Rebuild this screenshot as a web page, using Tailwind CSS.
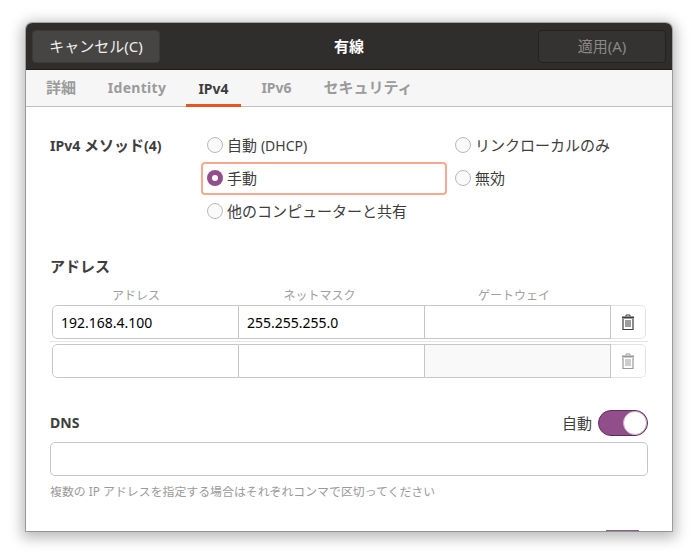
<!DOCTYPE html>
<html lang="ja">
<head>
    <meta charset="UTF-8">
    <title>有線</title>
    <script src="https://cdn.jsdelivr.net/npm/@tailwindcss/browser@4"></script>
</head>
<body class="bg-white h-[560px] w-[698px] overflow-hidden font-['Noto_Sans','Noto_Sans_CJK_JP',sans-serif] text-[15px] text-[#3d3d3d]">
    <!-- Window -->
    <div class="ml-[26px] mt-[23px] w-[646px] h-[508px] bg-white rounded-t-[6px] overflow-hidden shadow-[0_3px_14px_4px_rgba(0,0,0,0.28),0_0_0_1px_rgba(0,0,0,0.25)] flex flex-col">
        <!-- Header bar -->
        <div class="h-[47px] shrink-0 bg-[#302d2d] border-b border-[#1e1c1c] flex items-center justify-between px-[6px]">
            <button class="w-[128px] h-[33px] rounded-[4px] bg-[#474543] text-[#eeeeec] border border-[#3c3a39]">キャンセル(C)</button>
            <div class="text-white font-bold">有線</div>
            <button class="w-[128px] h-[33px] rounded-[4px] bg-[#353232] text-[#8b8886] border border-[#232121]">適用(A)</button>
        </div>

        <!-- Tabs -->
        <div class="h-[37px] shrink-0 bg-[#f6f6f6] border-b border-[#bfbfbf] flex pl-[8px] font-bold text-[#9b9b9b]">
            <div class="w-[54px] flex items-center justify-center pb-[1px]">詳細</div>
            <div class="w-[98px] flex items-center justify-center pb-[1px] text-[14px] tracking-[0.3px]">Identity</div>
            <div class="w-[55px] flex items-center justify-center text-[14px] text-[#3d3d3d] border-b-[3px] border-[#e95420] pt-[2px] -mb-px">IPv4</div>
            <div class="w-[71px] flex items-center justify-center pb-[1px] text-[14px]">IPv6</div>
            <div class="w-[112px] flex items-center justify-center pb-[1px]">セキュリティ</div>
        </div>

        <!-- Content -->
        <div class="relative flex-1 px-[24px]">
            <!-- Method -->
            <div class="flex mt-[22px] h-[99px]">
                <div class="w-[151px] pt-[5px] font-bold leading-[22px] whitespace-nowrap"><span class="text-[14px]">IPv4</span> メソッド<span class="text-[14px]">(4)</span></div>
                <div class="w-[248px] flex flex-col">
                    <div class="h-[33px] flex items-center gap-[4px] pl-[6px] pb-[1px]">
                        <span class="w-[16px] h-[16px] rounded-full border border-[#b9b9b9] bg-[#fafafa]"></span>
                        <span>自動 <span class="text-[14px]">(DHCP)</span></span>
                    </div>
                    <div class="h-[33px] w-[246px] flex items-center gap-[4px] pl-[4px] pb-[1px] border-2 border-[#f6a98e] rounded-[4px]">
                        <span class="w-[16px] h-[16px] rounded-full bg-[#924d8b] flex items-center justify-center">
                            <span class="w-[6px] h-[6px] rounded-full bg-white"></span>
                        </span>
                        <span>手動</span>
                    </div>
                    <div class="h-[33px] flex items-center gap-[4px] pl-[6px] pb-[1px]">
                        <span class="w-[16px] h-[16px] rounded-full border border-[#b9b9b9] bg-[#fafafa]"></span>
                        <span>他のコンピューターと共有</span>
                    </div>
                </div>
                <div class="flex flex-col">
                    <div class="h-[33px] flex items-center gap-[4px] pl-[6px] pb-[1px]">
                        <span class="w-[16px] h-[16px] rounded-full border border-[#b9b9b9] bg-[#fafafa]"></span>
                        <span>リンクローカルのみ</span>
                    </div>
                    <div class="h-[33px] flex items-center gap-[4px] pl-[6px] pb-[1px]">
                        <span class="w-[16px] h-[16px] rounded-full border border-[#b9b9b9] bg-[#fafafa]"></span>
                        <span>無効</span>
                    </div>
                </div>
            </div>

            <!-- Addresses -->
            <div class="mt-[27px] font-bold leading-[22px]">アドレス</div>
            <div class="mt-[10px] ml-[2px] w-[594px] grid grid-cols-[187px_186px_186px_35px] text-[12px] text-[#a0a0a0] leading-[18px] h-[18px]">
                <div class="text-center pr-[19px]">アドレス</div>
                <div class="text-center pr-[25px]">ネットマスク</div>
                <div class="text-center pr-[8px]">ゲートウェイ</div>
            </div>
            <div class="border-b border-[#e4e4e4] pb-[2px] px-[2px]">
                <div class="h-[34px] w-[594px] flex rounded-[5px] overflow-hidden text-[14px]">
                    <div class="w-[187px] border border-[#c6c6c6] rounded-l-[5px] flex items-center pl-[8px] text-black">192.168.4.100</div>
                    <div class="w-[186px] border-y border-r border-[#c6c6c6] flex items-center pl-[8px] text-black">255.255.255.0</div>
                    <div class="w-[186px] border-y border-r border-[#c6c6c6]"></div>
                    <div class="w-[35px] border-y border-r border-[#e2e2e2] rounded-r-[5px] flex items-center justify-center">
                        <svg width="14" height="17" viewBox="0 0 14 17" fill="none" stroke="#3d3d3d">
                            <path d="M1 3.5h12" stroke-width="2"/>
                            <path d="M5 2.5V1h4v1.5" stroke-width="1"/>
                            <path d="M2 5v10.5h10V5" stroke-width="1.2"/>
                            <path d="M5 6v7M7 6v7M9 6v7" stroke-width="1"/>
                        </svg>
                    </div>
                </div>
            </div>
            <div class="mt-[2px] ml-[2px] h-[34px] w-[594px] flex rounded-[5px] overflow-hidden">
                <div class="w-[187px] border border-[#c6c6c6] rounded-l-[5px]"></div>
                <div class="w-[186px] border-y border-r border-[#c6c6c6]"></div>
                <div class="w-[186px] border-y border-r border-[#c6c6c6] bg-[#f9f9f9]"></div>
                <div class="w-[35px] border-y border-r border-[#e2e2e2] rounded-r-[5px] flex items-center justify-center">
                    <svg width="14" height="17" viewBox="0 0 14 17" fill="none" stroke="#9a9a9a">
                        <path d="M1 3.5h12" stroke-width="2"/>
                        <path d="M5 2.5V1h4v1.5" stroke-width="1"/>
                        <path d="M2 5v10.5h10V5" stroke-width="1.2"/>
                        <path d="M5 6v7M7 6v7M9 6v7" stroke-width="1"/>
                    </svg>
                </div>
            </div>

            <!-- DNS -->
            <div class="mt-[32px] h-[26px] flex items-center justify-between">
                <div class="font-bold text-[14px] pb-[2px]">DNS</div>
                <div class="flex items-center gap-[6px]">
                    <span>自動</span>
                    <div class="w-[50px] h-[26px] rounded-full bg-[#924d8b] border border-[#5f2f5a] flex justify-end">
                        <span class="w-[24px] h-[24px] rounded-full bg-white border border-[#c9b4c7]"></span>
                    </div>
                </div>
            </div>
            <div class="mt-[6px] h-[34px] border border-[#c6c6c6] rounded-[5px] bg-white"></div>
            <div class="mt-[6px] text-[11.9px] text-[#9a9a9a] leading-[18px]">複数の IP アドレスを指定する場合はそれぞれコンマで区切ってください</div>

            <!-- next section's switch, clipped by the window edge -->
            <div class="absolute right-[33px] bottom-0 w-[33px] h-px bg-[#85607f]"></div>
        </div>
    </div>
</body>
</html>
